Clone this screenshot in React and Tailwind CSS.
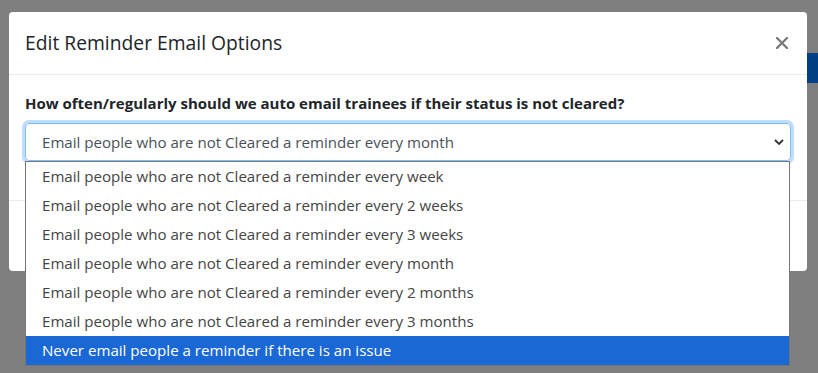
import React from 'react';

const options = [
    'Email people who are not Cleared a reminder every week',
    'Email people who are not Cleared a reminder every 2 weeks',
    'Email people who are not Cleared a reminder every 3 weeks',
    'Email people who are not Cleared a reminder every month',
    'Email people who are not Cleared a reminder every 2 months',
    'Email people who are not Cleared a reminder every 3 months',
    'Never email people a reminder if there is an issue',
];

const App = () => {
    const highlighted = 6;

    return (
        <div className="flex h-[373px] w-[818px] overflow-hidden bg-[#7f7f7f] pl-[9px] pt-[12px] font-['Open_Sans',sans-serif]">
            <div className="h-[259px] w-[798px] shrink-0 rounded-[4px] bg-white">
                {/* header */}
                <div className="flex h-[63px] items-center justify-between border-b border-[#e9ecef] px-4">
                    <h5 className="text-[19.3px] leading-[30px] font-medium text-[#212529]">Edit Reminder Email Options</h5>
                    <svg width="12" height="12" viewBox="0 0 12 12" className="mr-[3px]">
                        <path d="M1 1L11 11M11 1L1 11" stroke="#7b7b7b" strokeWidth="2.4" strokeLinecap="round" />
                    </svg>
                </div>

                {/* body */}
                <div className="h-[126px] border-b border-[#e9ecef] px-4 pt-4">
                    <label className="mb-2 block text-[15px] leading-6 font-bold text-[#212529]">
                        How often/regularly should we auto email trainees if their status is not cleared?
                    </label>
                    <div className="relative">
                        <div className="flex h-[38px] items-center justify-between rounded-[4px] border border-[#80bdff] pl-4 pr-[6px] text-[15.1px] text-[#495057] shadow-[0_0_0_3px_rgba(0,123,255,0.25)]">
                            <span>{options[3]}</span>
                            <svg width="10" height="6" viewBox="0 0 10 6">
                                <path d="M1 1L5 5L9 1" fill="none" stroke="#333" strokeWidth="1.8" />
                            </svg>
                        </div>

                        {/* open native list */}
                        <ul className="absolute left-0 top-full z-10 w-[765px] border border-[#767676] bg-white">
                            {options.map((opt, i) => (
                                <li
                                    key={opt}
                                    className={`flex h-[29px] items-center pl-4 text-[15.1px] ${i === highlighted ? 'bg-[#1a68d6] text-white' : 'text-[#444]'}`}
                                >
                                    {opt}
                                </li>
                            ))}
                        </ul>
                    </div>
                </div>
            </div>
            <div className="mt-[41px] h-[30px] w-[11px] shrink-0 bg-[#003f86]"></div>
        </div>
    );
};

export default App;
